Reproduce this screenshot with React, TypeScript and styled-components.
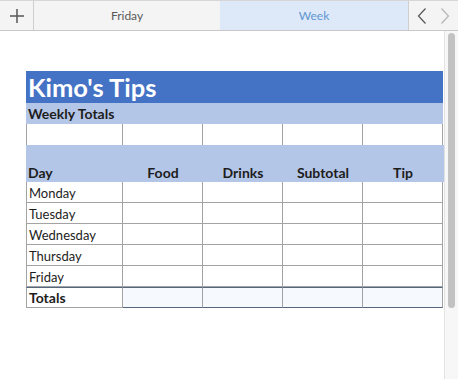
import React from 'react';
import styled, { createGlobalStyle } from 'styled-components';

const GlobalStyle = createGlobalStyle`
    html, body {
        margin: 0;
        padding: 0;
        background: #ffffff;
    }
`;

const COLS = '97px 80px 80px 80px 80px';
const GRID_LINE = '#a3a3a3';
const TOTAL_LINE = '#55677d';

const Window = styled.div`
    width: 458px;
    height: 379px;
    display: flex;
    flex-direction: column;
    overflow: hidden;
    font-family: Lato, 'Open Sans', sans-serif;
    background: #ffffff;
`;

const TabBar = styled.div`
    height: 29px;
    display: flex;
    background: #f4f4f4;
    border-top: 1px solid #d6d6d6;
    border-bottom: 1px solid #c8c8c8;
`;

const AddButton = styled.div`
    width: 33px;
    display: flex;
    align-items: center;
    justify-content: center;
    border-right: 1px solid #cfcfcf;
    color: #555555;
`;

const Tab = styled.div<{ $active?: boolean; $width?: number }>`
    flex: ${p => (p.$width ? `0 0 ${p.$width}px` : '1')};
    display: flex;
    align-items: center;
    justify-content: center;
    font-size: 12px;
    color: ${p => (p.$active ? '#5f96d0' : '#5a5a5a')};
    background: ${p => (p.$active ? '#dde9f9' : 'transparent')};
    border-right: ${p => (p.$active ? '1px solid #cfcfcf' : 'none')};
`;

const Arrows = styled.div`
    width: 45px;
    display: flex;
    align-items: center;
    justify-content: space-around;
    padding: 0 2px;
`;

const Body = styled.div`
    flex: 1;
    display: flex;
    min-height: 0;
`;

const Sheet = styled.div`
    flex: 1;
    padding: 40px 0 0 26px;
`;

const ScrollTrack = styled.div`
    width: 14px;
    box-sizing: border-box;
    background: #f7f7f7;
    border-left: 1px solid #e2e2e2;
    padding: 2px 3px 0 3px;
`;

const ScrollThumb = styled.div`
    width: 7px;
    height: 275px;
    border-radius: 4px;
    background: #c2c2c2;
`;

const TitleRow = styled.div`
    width: 417px;
    height: 32px;
    background: #4472c4;
    color: #ffffff;
    font-size: 25.5px;
    font-weight: 700;
    display: flex;
    align-items: center;
    padding-left: 2px;
    box-sizing: border-box;
`;

const SubtitleRow = styled.div`
    width: 417px;
    height: 21px;
    background: #b4c6e7;
    color: #1d1d1d;
    font-size: 14px;
    font-weight: 700;
    display: flex;
    align-items: center;
    padding-left: 2px;
    box-sizing: border-box;
`;

const Row = styled.div<{ $height: number; $bg?: string }>`
    display: grid;
    grid-template-columns: ${COLS};
    height: ${p => p.$height}px;
    background: ${p => p.$bg ?? '#ffffff'};
`;

const Cell = styled.div<{
    $align?: 'left' | 'center';
    $bold?: boolean;
    $lines?: boolean;
    $bottomLine?: string;
    $topLine?: string;
    $tint?: boolean;
}>`
    box-sizing: border-box;
    display: flex;
    align-items: flex-end;
    justify-content: ${p => (p.$align === 'center' ? 'center' : 'flex-start')};
    padding: 0 2px 1px 2px;
    font-size: ${p => (p.$bold ? '14px' : '13px')};
    font-weight: ${p => (p.$bold ? 700 : 400)};
    color: #1d1d1d;
    border-right: ${p => (p.$lines ? `1px solid ${GRID_LINE}` : 'none')};
    border-bottom: ${p => (p.$bottomLine ? `1px solid ${p.$bottomLine}` : 'none')};
    border-top: ${p => (p.$topLine ? `1px solid ${p.$topLine}` : 'none')};
    background: ${p => (p.$tint ? '#f6f9fd' : 'transparent')};

    &:first-child {
        border-left: ${p => (p.$lines ? `1px solid ${GRID_LINE}` : 'none')};
    }
`;

const days = ['Monday', 'Tuesday', 'Wednesday', 'Thursday', 'Friday'];
const headers = ['Food', 'Drinks', 'Subtotal', 'Tip'];

const Chevron = ({ dir, color }: { dir: 'left' | 'right'; color: string }) => (
    <svg width="10" height="18" viewBox="0 0 10 18">
        <path
            d={dir === 'left' ? 'M8.5 1.5 L1.5 9 L8.5 16.5' : 'M1.5 1.5 L8.5 9 L1.5 16.5'}
            fill="none"
            stroke={color}
            strokeWidth="1.2"
        />
    </svg>
);

const App = () => (
    <Window>
        <GlobalStyle />
        <TabBar>
            <AddButton>
                <svg width="16" height="16" viewBox="0 0 16 16">
                    <path d="M8 1 V15 M1 8 H15" stroke="#555" strokeWidth="1.5" />
                </svg>
            </AddButton>
            <Tab $width={186}>Friday</Tab>
            <Tab $active>Week</Tab>
            <Arrows>
                <Chevron dir="left" color="#555555" />
                <Chevron dir="right" color="#b5b5b5" />
            </Arrows>
        </TabBar>
        <Body>
            <Sheet>
                <TitleRow>Kimo's Tips</TitleRow>
                <SubtitleRow>Weekly Totals</SubtitleRow>
                <Row $height={21}>
                    {[0, 1, 2, 3, 4].map(i => (
                        <Cell key={i} $lines />
                    ))}
                </Row>
                <Row $height={37} $bg="#b4c6e7">
                    <Cell $bold>Day</Cell>
                    {headers.map(h => (
                        <Cell key={h} $bold $align="center">
                            {h}
                        </Cell>
                    ))}
                </Row>
                {days.map(day => (
                    <Row key={day} $height={21}>
                        <Cell $lines $bottomLine={GRID_LINE}>
                            {day}
                        </Cell>
                        {headers.map(h => (
                            <Cell key={h} $lines $bottomLine={GRID_LINE} />
                        ))}
                    </Row>
                ))}
                <Row $height={21}>
                    <Cell $lines $bold $bottomLine={GRID_LINE} $topLine={TOTAL_LINE}>
                        Totals
                    </Cell>
                    {headers.map(h => (
                        <Cell key={h} $lines $tint $bottomLine={TOTAL_LINE} $topLine={TOTAL_LINE} />
                    ))}
                </Row>
            </Sheet>
            <ScrollTrack>
                <ScrollThumb />
            </ScrollTrack>
        </Body>
    </Window>
);

export default App;
